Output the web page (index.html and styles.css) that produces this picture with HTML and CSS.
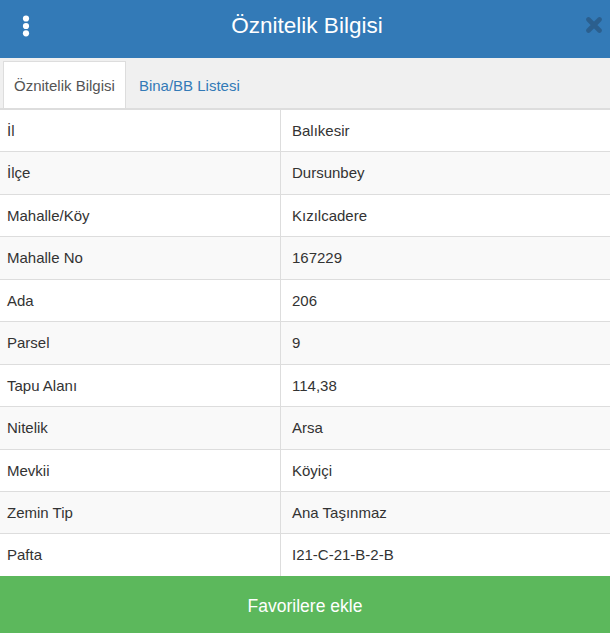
FILE: index.html
```html
<!DOCTYPE html>
<html lang="tr">
<head>
<meta charset="utf-8">
<title>Öznitelik Bilgisi</title>
<link rel="stylesheet" href="styles.css">
</head>
<body>
<div class="panel">
  <header class="header">
    <span class="menu-icon">
      <svg width="8" height="22" viewBox="0 0 8 22"><circle cx="4" cy="3.5" r="3.1" fill="#fff"/><circle cx="4" cy="11" r="3.1" fill="#fff"/><circle cx="4" cy="18.3" r="3.1" fill="#fff"/></svg>
    </span>
    <h1 class="title">Öznitelik Bilgisi</h1>
    <span class="close-icon">
      <svg width="16" height="16" viewBox="0 0 16 16"><path d="M2.5 2.5 L13.5 13.5 M13.5 2.5 L2.5 13.5" stroke="#2b5f8e" stroke-width="4.6" stroke-linecap="round"/></svg>
    </span>
  </header>
  <nav class="tabs">
    <a class="tab active">Öznitelik Bilgisi</a>
    <a class="tab">Bina/BB Listesi</a>
  </nav>
  <table class="attr-table">
    <colgroup><col class="col-key"><col></colgroup>
    <tbody>
      <tr><td class="key">İl</td><td class="val">Balıkesir</td></tr>
      <tr><td class="key">İlçe</td><td class="val">Dursunbey</td></tr>
      <tr><td class="key">Mahalle/Köy</td><td class="val">Kızılcadere</td></tr>
      <tr><td class="key">Mahalle No</td><td class="val">167229</td></tr>
      <tr><td class="key">Ada</td><td class="val">206</td></tr>
      <tr><td class="key">Parsel</td><td class="val">9</td></tr>
      <tr><td class="key">Tapu Alanı</td><td class="val">114,38</td></tr>
      <tr><td class="key">Nitelik</td><td class="val">Arsa</td></tr>
      <tr><td class="key">Mevkii</td><td class="val">Köyiçi</td></tr>
      <tr><td class="key">Zemin Tip</td><td class="val">Ana Taşınmaz</td></tr>
      <tr><td class="key">Pafta</td><td class="val">I21-C-21-B-2-B</td></tr>
    </tbody>
  </table>
  <button class="fav-btn">Favorilere ekle</button>
</div>
</body>
</html>
```
FILE: styles.css
```css
html, body {
  margin: 0;
  padding: 0;
}
body {
  font-family: "Liberation Sans", Arial, sans-serif;
  color: #333;
  background: #fff;
}
.panel {
  width: 610px;
  height: 633px;
  display: flex;
  flex-direction: column;
  overflow: hidden;
}
.header {
  height: 58px;
  flex: none;
  background: #337ab7;
  display: flex;
  align-items: flex-start;
  position: relative;
}
.menu-icon {
  position: absolute;
  left: 22px;
  top: 15px;
  display: block;
  line-height: 0;
}
.title {
  margin: 0;
  flex: 1;
  text-align: center;
  color: #fff;
  font-weight: normal;
  font-size: 22.5px;
  line-height: 52px;
  padding-left: 4px;
}
.close-icon {
  position: absolute;
  left: 586px;
  top: 17px;
  display: block;
  line-height: 0;
}
.tabs {
  flex: none;
  box-sizing: border-box;
  background: #f0f0f0;
  border-bottom: 2px solid #ddd;
  padding: 3px 0 0 3px;
  display: flex;
  align-items: flex-end;
  gap: 2px;
  height: 52px;
}
.tab {
  font-size: 15px;
  line-height: 21px;
  padding: 13px 10px 12px;
  border: 1px solid transparent;
  border-bottom: 0;
  color: #337ab7;
  cursor: pointer;
}
.tab.active {
  background: #fff;
  color: #555;
  border-color: #ddd;
}
.attr-table {
  width: 610px;
  border-collapse: separate;
  border-spacing: 0;
  table-layout: fixed;
  flex: none;
  font-size: 15px;
}
.col-key {
  width: 281px;
}
.attr-table td {
  padding: 10px 10px 10px 7px;
  line-height: 21.43px;
  border-top: 1px solid #ddd;
  vertical-align: middle;
  white-space: nowrap;
}
.attr-table tr:first-child td {
  border-top: 0;
}
.attr-table td.key {
  border-right: 1px solid #ddd;
}
.attr-table td.val {
  padding-left: 11px;
}
.attr-table tr:nth-child(even) td {
  background: #f9f9f9;
}
.fav-btn {
  flex: 1;
  border: 0;
  margin: 0;
  background: #5cb85c;
  color: #fff;
  font-family: "Liberation Sans", Arial, sans-serif;
  font-size: 17.5px;
  padding: 4px 0 0;
  cursor: pointer;
}
```
